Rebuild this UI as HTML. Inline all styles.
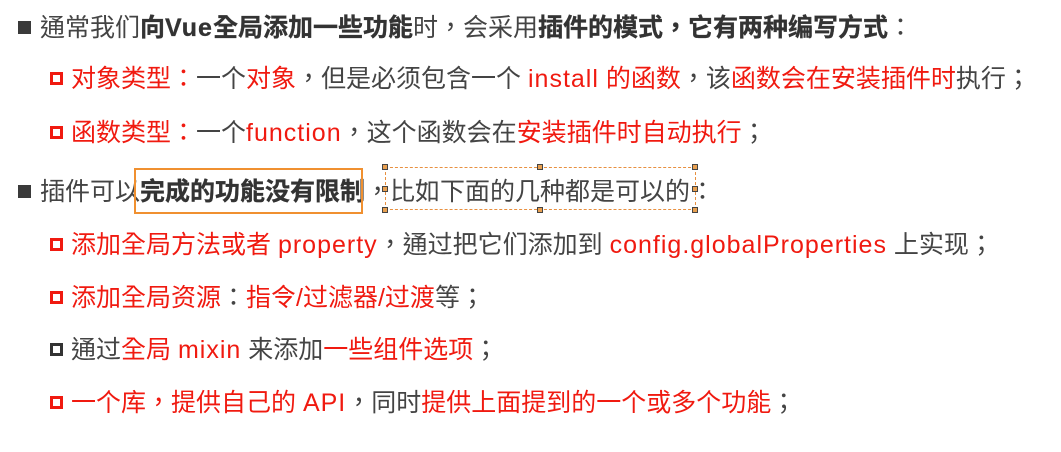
<!DOCTYPE html>
<html><head><meta charset="utf-8"><style>
body{margin:0;width:1061px;height:452px;background:#fff;overflow:hidden;position:relative;font-family:"Liberation Sans","Noto Sans CJK TC",sans-serif;font-size:25px;color:#444}
.l{position:absolute;height:30px;line-height:30px;white-space:nowrap}
.r{color:#f01a10}
.e{letter-spacing:1px}
b{font-weight:bold;color:#333;-webkit-text-stroke:0.3px #333}
.sq{position:absolute;width:13px;height:13px;background:#3a3a3a}
.hs{position:absolute;width:13px;height:13px;border:3px solid #f01a10;box-sizing:border-box}
.hd{border-color:#333}
.h{position:absolute;width:6px;height:6px;border:1px solid #444;background:#e8a050;box-sizing:border-box}
</style></head><body>
<div class="sq" style="left:18px;top:21px"></div>
<div class="l" style="left:40px;top:13px">通常我们<b>向<span class="e">Vue</span>全局添加一些功能</b>时，会采用<b>插件的模式，它有两种编写方式</b>：</div>
<div class="hs" style="left:50px;top:72px"></div>
<div class="l" style="left:71px;top:64px"><span class="r">对象类型：</span>一个<span class="r">对象</span>，但是必须包含一个 <span class="r"><span class="e">install</span> 的函数</span>，该<span class="r">函数会在安装插件时</span>执行；</div>
<div class="hs" style="left:50px;top:126px"></div>
<div class="l" style="left:71px;top:118px"><span class="r">函数类型：</span>一个<span class="r e">function</span>，这个函数会在<span class="r">安装插件时自动执行</span>；</div>
<div class="sq" style="left:18px;top:185px"></div>
<div class="l" style="left:40px;top:177px">插件可以<b>完成的功能没有限制</b>，比如下面的几种都是可以的：</div>
<div style="position:absolute;left:134px;top:168px;width:229px;height:46px;border:2px solid #f09030;box-sizing:border-box"></div>
<div style="position:absolute;left:385px;top:167px;width:311px;height:43px;border:1.5px dashed #e89040;box-sizing:border-box"></div>
<div class="h" style="left:382px;top:164px"></div><div class="h" style="left:537px;top:164px"></div><div class="h" style="left:692px;top:164px"></div>
<div class="h" style="left:382px;top:186px"></div><div class="h" style="left:692px;top:186px"></div>
<div class="h" style="left:382px;top:207px"></div><div class="h" style="left:537px;top:207px"></div><div class="h" style="left:692px;top:207px"></div>
<div class="hs" style="left:50px;top:238px"></div>
<div class="l" style="left:71px;top:230px"><span class="r">添加全局方法或者 <span class="e">property</span></span>，通过把它们添加到 <span class="r e">config.globalProperties</span> 上实现；</div>
<div class="hs" style="left:50px;top:291px"></div>
<div class="l" style="left:71px;top:283px"><span class="r">添加全局资源</span>：<span class="r">指令/过滤器/过渡</span>等；</div>
<div class="hs hd" style="left:50px;top:343px"></div>
<div class="l" style="left:71px;top:335px">通过<span class="r">全局 <span class="e">mixin</span></span> 来添加<span class="r">一些组件选项</span>；</div>
<div class="hs" style="left:50px;top:396px"></div>
<div class="l" style="left:71px;top:388px"><span class="r">一个库，提供自己的 <span class="e">API</span></span>，同时<span class="r">提供上面提到的一个或多个功能</span>；</div>
</body></html>
